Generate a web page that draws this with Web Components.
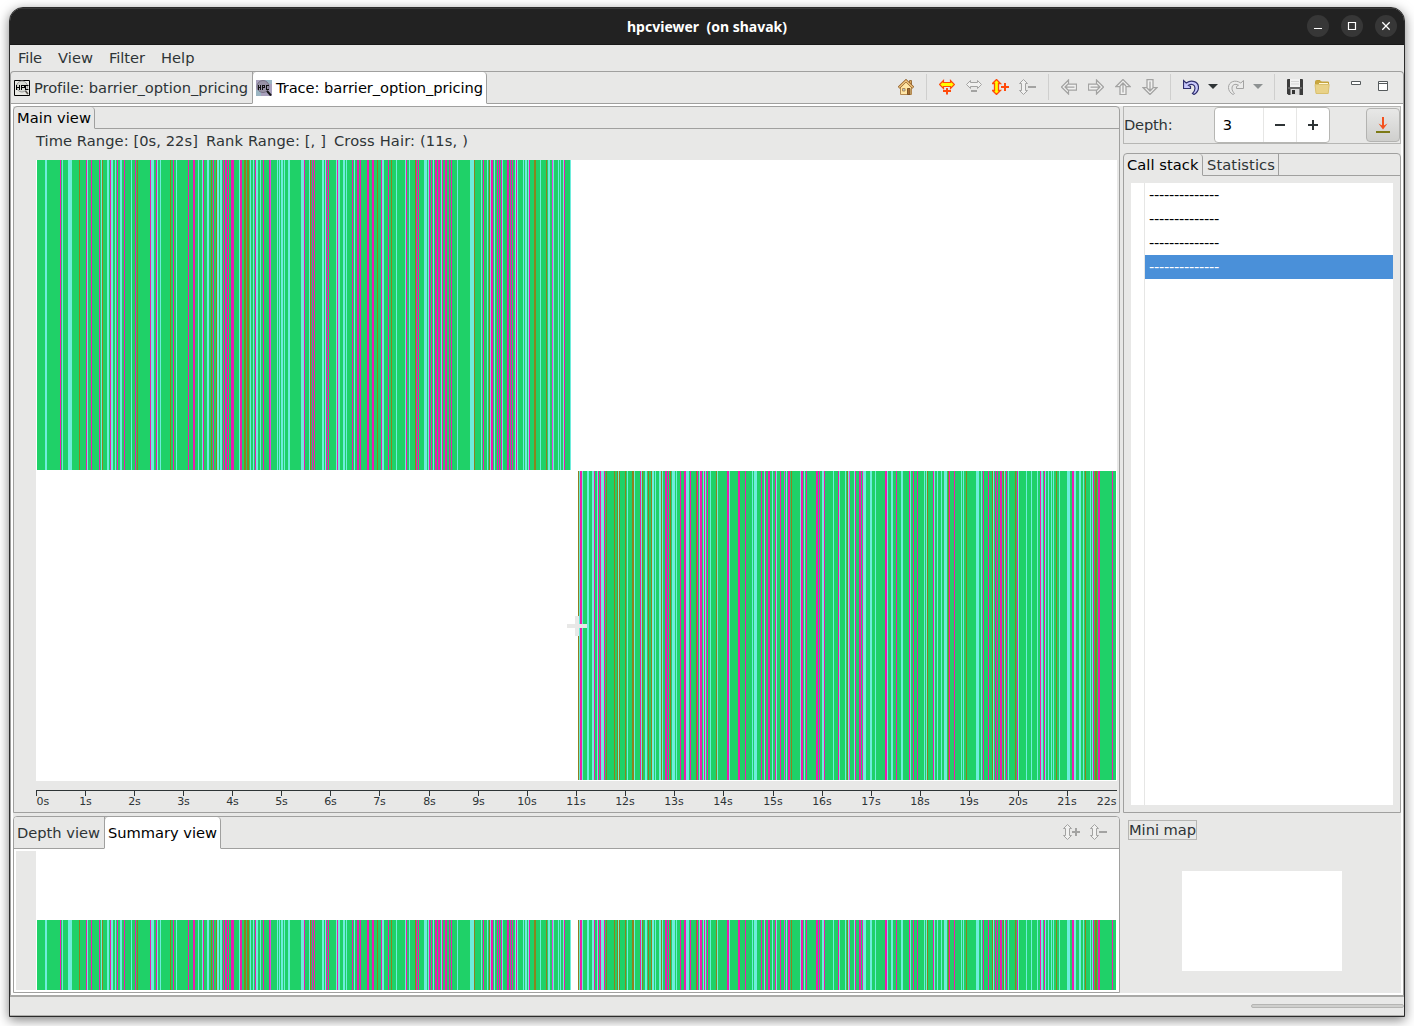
<!DOCTYPE html>
<html lang="en"><head><meta charset="utf-8"><title>hpcviewer</title>
<style>
html,body{margin:0;height:100%;overflow:hidden;background:#fff}
body{font:14.667px "DejaVu Sans",sans-serif;color:#2e3436}
</style></head><body>
<hpc-window></hpc-window>
<script>
const define=(name,html,after)=>customElements.define(name,class extends HTMLElement{
  connectedCallback(){
    if(this.shadowRoot)return;
    const r=this.attachShadow({mode:'open'});
    r.innerHTML=typeof html==='function'?html(this):html;
    if(after)after(this,r);
  }
});

/* Single-line label; "w" is the advance width that the text is tracked to. */
define('hpc-label','<style>:host{display:block;white-space:pre;flex:none}span{display:inline-block}</style><span><slot></slot></span>',(el,r)=>{
  const w=+el.getAttribute('w');if(!w)return;
  const s=r.querySelector('span'),n=el.textContent.length;
  s.style.letterSpacing=((w-s.getBoundingClientRect().width)/n).toFixed(3)+'px';
});

const V='M4.5.5 8.5 4.5H6.5V11.5H8.5L4.5 15.5.5 11.5H2.5V4.5H.5Z';
const A='M.5 8 7.5 1V5H15.5V11H7.5V15Z M4 8H13.5M7 5 4 8 7 11';
const gray='fill="#f1f1f0" stroke="#a3a3a2"';
const icons={
 home:'<path d="M2.5 8V15.5H13.5V8L8 3Z" fill="#ffe6a6" stroke="#b58a52"/><path d="M11.500 1.500h2V6h-2z" fill="#dcaa61" stroke="#9c713c"/><path d="M.7 8.7 8 1.6 15.3 8.7" fill="none" stroke="#96652e" stroke-width="2.6"/><path d="M1.2 8.4 8 1.9 14.8 8.4" fill="none" stroke="#f7cd86" stroke-width="1.300"/><path d="M4.5 9.5h2.500v2.500h-2.500z" fill="#a6c9e7" stroke="#b58d55"/><path d="M9.5 9.5h2.500v6h-2.500z" fill="#a86c2e" stroke="#7e5526"/>',
 hin:'<path d="M.5 5.5 4.5 1.5V3.5H11.5V1.5L15.5 5.5 11.5 9.5V7.5H4.5V9.5Z" fill="#ff0" stroke="#ff4a0b" stroke-width="1.200"/><path d="M7 9h2v2h3v2H9V15.500H7V13H4v-2h3z" fill="#ff4a0b"/>',
 hout:`<path d="M.5 5.5 4.5 1.5V3.5H11.5V1.5L15.5 5.5 11.5 9.5V7.5H4.5V9.5Z" ${gray}/><path d="M5 11h6v2H5z" fill="#a3a3a2"/>`,
 vin:`<path d="${V}" fill="#ff0" stroke="#ff4a0b" stroke-width="1.300"/><path d="M12 4h2v3h3v2h-3v3h-2V9H9V7h3z" fill="#ff4a0b"/>`,
 vout:`<path d="${V}" ${gray}/><path d="M9 7h8v2H9z" fill="#a3a3a2"/>`,
 ving:`<path d="${V}" ${gray}/><path d="M12 4h2v3h3v2h-3v3h-2V9H9V7h3z" fill="#a3a3a2"/>`,
 left:`<path d="${A}" ${gray} stroke-width="1.25"/>`,
 right:`<path transform="matrix(-1 0 0 1 16 0)" d="${A}" ${gray} stroke-width="1.25"/>`,
 up:`<path transform="matrix(0 1 1 0 0 0)" d="${A}" ${gray} stroke-width="1.25"/>`,
 down:`<path transform="matrix(0 -1 1 0 0 16)" d="${A}" ${gray} stroke-width="1.25"/>`,
 undo:'<path d="M.5 1.5V9.5H7.5V7.5L5.5 6.2C9 4.3 12 5.7 12 9.2 12 11.5 11 13 9.5 14.5L11 15.5C14 13.7 15.5 11.5 15.5 8.5 15.5 2.5 8.5.3 3.2 4Z" fill="#c8c8fb" stroke="#30306e" stroke-width="1.2"/>',
 redo:'<path transform="matrix(-1 0 0 1 16 0)" d="M.5 1.5V9.5H7.5V7.5L5.5 6.2C9 4.3 12 5.7 12 9.2 12 11.5 11 13 9.5 14.5L11 15.5C14 13.7 15.5 11.5 15.5 8.5 15.5 2.5 8.5.3 3.2 4Z" fill="#ebebea" stroke="#a3a3a2"/>',
 caret:'<path d="M0 0H10L5 5Z" fill="#2e3436"/>',
 caretg:'<path d="M0 0H10L5 5Z" fill="#8d9192"/>',
 save:'<path d="M0 1Q0 0 1 0H15Q16 0 16 1V16H1.500L0 14.500Z" fill="#3c3c3c"/><path d="M3 0h10v8H3z" fill="#f2f2f2"/><path d="M1 8h14v2H1z" fill="#666"/><path d="M3.500 10h9v6h-9z" fill="#dcdcdc"/><path d="M5 11h3v4H5z" fill="#333"/><path d="M4 2.5h8M4 5h8" stroke="#d5d5d5"/>',
 folder:'<path d="M1.5 5V2.5Q1.5 1.5 2.5 1.5H6L7.5 3H14.5V7H1.5Z" fill="#c9a73f" stroke="#c3a13b"/><path d="M5 4h9v2H5z" fill="#fff8d8"/><path d="M1 5.5H15.2L14.2 14.5H2Z" fill="#e9d288" stroke="#d9c06e"/>',
 min:'<path d="M.5.5h9v3h-9z" fill="#fff" stroke="#555a5c"/>',
 max:'<path d="M.5.5h9v9h-9zM.5 2.5h9" fill="#fff" stroke="#555a5c"/>',
 drop:'<path d="M8 0V9" stroke="#f4511e" stroke-width="2"/><path d="M3.5 6.500 8 12.5 12.5 6.500 8 9Z" fill="#f4511e"/><path d="M1 14h14v2H1z" fill="#7d7a16"/>',
 prof:'<path d="M.5.5h15v15H.5z" fill="#e9e9e4" stroke="#000"/><circle cx="8" cy="6.5" r="5.5" fill="#d7d9d2" stroke="#999"/><path d="M11.5 11 14 14" stroke="#55504a" stroke-width="1.6"/><path d="M2.500 5v5M5.500 5v5M2 7.500h4M7.500 10V5M7 5.500h3M10.500 5v3M7 7.500h3M11.500 5v5M11 5.500h3.500M11 9.500h3.500" fill="none" stroke="#000"/>',
 trace:'<path d="M0 0h16v16H0z" fill="#a9a1bd"/><path d="M9 0h7v4H9zM0 10h5v6H0z" fill="#9bb5c2"/><circle cx="7" cy="6.5" r="6" fill="#9993a6" stroke="#777184"/><path d="M11 11 15 15.5" stroke="#161616" stroke-width="2"/><path d="M2.500 5v5M4.500 5v5M2 7.500h3M6.500 10V5M6 5.500h3M8.500 5v3M6 7.500h3M10.500 5v5M10 5.500h3M10 9.500h3" fill="none" stroke="#111"/>',
 wmin:'<path d="M4 10.500h8" stroke="#fff"/>',
 wmax:'<path d="M4.500 4.500h7v7h-7z" fill="none" stroke="#fff" stroke-width="1.200"/>',
 wx:'<path d="M4.300 4.300 11.700 11.700M11.700 4.300 4.300 11.700" stroke="#fff" stroke-width="1.300"/>'
};
const size={caret:[10,5],caretg:[10,5],min:[10,4],max:[10,10],ving:[17,16],vin:[17,16],vout:[17,16]};
define('hpc-icon',el=>{
  const n=el.getAttribute('name'),[w,h]=size[n]||[16,16];
  return `<style>:host{display:block;flex:none}svg{display:block}</style><svg width="${w}" height="${h}" viewBox="0 0 ${w} ${h}">${icons[n]}</svg>`;
});

/* Trace samples: kind, pixel column, optional run length.
   c = cyan, m = magenta, b = brown, p = light magenta */
const left='c45,2 m60 c62 c68,4 b79 m86 c87 m91 m99 c101 b102 c107 c108 m110 c111,2 c115 m117 c120,2 m124 c131 m135 b137 m150 c151,3 m156 c157 c160 b170 m173 c176 m188 m193,2 c198 c202 m203 c207,2 b211 m213 b216 c217,2 c220,2 m223 m225,2 m228 m231,3 c239 m240,2 b244,2 b247,2 c250 c253 m255 c256,2 c260 m263 m269 p270 c277 c279 c281,2 c284 c288,2 c301,3 m304 c309 b310 m312 m314 c322,2 c325 m326 m328 c336 m337 c338,2 c343,2 c346 m352 c354 m357,2 m360 m367,2 m372,2 b377 m381 c382,2 m388 b391 c396 c405 m406 c409 b415 m416 m418 c424,3 c428 m429 m431 c433 m435,2 m438,2 c441 m442 m445,2 m449 m451 c457 c470,4 b474 c481 m483 c487 b489 c490 m491,2 c494 m497 m499 m501 c502 m507,2 m510 m512 c515 m516 c517 c523 c525,2 c528 m529 b534,2 c540 b546 c548,2 p552 c553 c558 c560 c563 m564 c570';
const right='b578 c579 m580,2 c582 c587,2 c592,2 m594 c597 m598 m600 c601 c602,2 m604 b606 b614 b617 c618 b619 b625 c627 b632,2 c634 m640 c641 b642 c645,2 b648 b651 c652,2 c655 c659,2 b661 c662 m665,2 m668 b670 c672,3 c676 m680 m684,2 c686,3 m690 b696 m697 c699 m700,2 c703 m704 c705 m707 c710 b716 c717 m727,2 c729 m738,2 m745 c752 c754,3 m761 c764 m765 m768,2 c772 m775 c776 m780 p784 c786 m788,2 b791 c800 m801,2 c804 m806 m816,2 m819 c822,2 m824 c833 m838 c839 c845 b847 c848 p849 c854 m855 m859,2 m862 c863,3 c870,2 c875 m885,2 c887 c891,2 m896 c901,2 m909 c910 m913 m917 c924 c926 b927 m933 c934 c937 c941 c944,3 b948 m949 m954 c961 c963 b966 c976,3 c981 m983 m988 b992 c993 m995 m997 m1000,2 b1003 c1004 m1006 c1008 b1015 m1017 c1018 c1026 c1031 c1037 m1040 c1041,2 m1044 c1045 c1048 c1051 c1053 b1056 c1059 c1067,3 m1072,2 c1074,2 c1079,2 c1083 b1085 c1090 c1092 m1093 b1095,2 m1098,2 m1112';
const tint={c:'#6eeddb',m:'#eb1eaf',b:'#8c821e',p:'#e04be0'};
const band=(src,from,to,y,h)=>{
  let s=`<rect x="${from-36}" y="${y}" width="${to-from}" height="${h}" fill="#1fd168"/>`;
  for(const t of src.split(' ')){const [x,w=1]=t.slice(1).split(',');s+=`<rect x="${x-36}" y="${y}" width="${w}" height="${h}" fill="${tint[t[0]]}"/>`}
  return s;
};
define('hpc-trace',el=>{
  const main=el.getAttribute('mode')==='main',h=main?621:140;
  const g=main?band(left,37,571,0,310)+band(right,578,1116,311,309)+'<path d="M531 466h20M541 456v20" stroke="#e8e8e7" stroke-width="4"/>'
              :band(left,37,571,70,70)+band(right,578,1116,70,70);
  return `<style>:host{display:block;flex:none;width:1081px;background:#fff}svg{display:block}</style><svg width="1081" height="${h}" shape-rendering="crispEdges">${g}</svg>`;
});
define('hpc-axis',()=>{
  let s='<path d="M0 .5H1081" stroke="#2e3436"/>';
  for(let i=0;i<=22;i++){
    const x=Math.floor(i*1081/22)+.5;
    if(i<22)s+=`<path d="M${x} 1V6" stroke="#2e3436"/>`;
    s+=`<text x="${i==0?.5:i==22?1080.5:i>9?x-.5:x}" y="15" text-anchor="${i==0?'start':i==22?'end':'middle'}">${i}s</text>`;
  }
  return `<style>:host{display:block;flex:none}svg{display:block;font:11px "DejaVu Sans",sans-serif;fill:#2e3436}</style><svg width="1081" height="18">${s}</svg>`;
});

define('hpc-titlebar',`<style>:host{display:flex;height:37px;flex:none;align-items:center;background:#222;color:#fff;box-sizing:border-box;border-top:1px solid #383838;border-bottom:1px solid #181818;font:bold 14px "Noto Sans","Open Sans",sans-serif}
.side{flex:1;display:flex;justify-content:flex-end;gap:12px;padding-right:7px;margin-top:-1px}.side:first-child{padding-left:7px;padding-right:0}
.b{width:22px;height:22px;border-radius:50%;background:#373737;display:grid;place-items:center}</style>
<div class="side"></div><hpc-label w="160">hpcviewer  (on shavak)</hpc-label><div class="side"><div class="b"><hpc-icon name="wmin"></hpc-icon></div><div class="b"><hpc-icon name="wmax"></hpc-icon></div><div class="b"><hpc-icon name="wx"></hpc-icon></div></div>`);

define('hpc-menubar',`<style>:host{display:flex;height:26px;flex:none;padding-left:8px;gap:16px;line-height:26px;box-sizing:border-box}</style>
<hpc-label w="24">File</hpc-label><hpc-label w="35">View</hpc-label><hpc-label w="36">Filter</hpc-label><hpc-label w="33.5">Help</hpc-label>`);

define('hpc-tab',`<style>:host{display:flex;align-items:center;flex:none;box-sizing:border-box;border-right:1px solid #a0a09f;border-bottom:1px solid #a0a09f;gap:4px}
:host([on]){color:#000;border-bottom-color:transparent;border-radius:0 4px 0 0}
:host([white]){background:#fff;border-left:1px solid #a0a09f;border-bottom-color:#fff;border-radius:4px 4px 0 0;margin-left:-1px}</style><slot></slot>`);

define('hpc-toolbar',`<style>:host{display:flex;flex:1;border-bottom:1px solid #a0a09f;justify-content:flex-end;align-items:center;padding:0 15px 2px 0;box-sizing:border-box}
i{width:1px;height:26px;background:#cfcfce;flex:none}</style>
<hpc-icon name="home"></hpc-icon><i style="margin:0 12px"></i>
<hpc-icon name="hin"></hpc-icon><hpc-icon name="hout" style="margin-left:11px"></hpc-icon><hpc-icon name="vin" style="margin-left:10px"></hpc-icon><hpc-icon name="vout" style="margin-left:10px"></hpc-icon><i style="margin:0 12px"></i>
<hpc-icon name="left"></hpc-icon><hpc-icon name="right" style="margin-left:11px"></hpc-icon><hpc-icon name="up" style="margin-left:11px"></hpc-icon><hpc-icon name="down" style="margin-left:11px"></hpc-icon><i style="margin:0 12px"></i>
<hpc-icon name="undo"></hpc-icon><hpc-icon name="caret" style="margin-left:9px"></hpc-icon><hpc-icon name="redo" style="margin-left:10px"></hpc-icon><hpc-icon name="caretg" style="margin-left:9px"></hpc-icon><i style="margin:0 12px 0 11px"></i>
<hpc-icon name="save"></hpc-icon><hpc-icon name="folder" style="margin-left:11px"></hpc-icon><hpc-icon name="min" style="margin:0 0 7px 21px"></hpc-icon><hpc-icon name="max" style="margin:0 0 2px 17px"></hpc-icon>`);

define('hpc-editor-tabs',`<style>:host{display:flex;height:33px;flex:none;box-sizing:border-box;border:1px solid #a0a09f;border-bottom:0;border-radius:4px 4px 0 0}</style>
<hpc-tab style="width:242px;padding-left:3px"><hpc-icon name="prof"></hpc-icon><hpc-label w="214">Profile: barrier_option_pricing</hpc-label></hpc-tab>
<hpc-tab on white style="width:235px;padding-left:3px"><hpc-icon name="trace"></hpc-icon><hpc-label w="207">Trace: barrier_option_pricing</hpc-label></hpc-tab>
<hpc-toolbar></hpc-toolbar>`);

define('hpc-main-view',`<style>:host{display:flex;flex-direction:column;height:707px;flex:none;box-sizing:border-box;border:1px solid #a0a09f;border-radius:4px 4px 0 0;background:#e8e8e7}
.h{display:flex;height:22px;flex:none}.h b{flex:1;border-bottom:1px solid #a0a09f}
.info{display:flex;height:31px;line-height:24px;padding-left:22px;gap:8px}.c{padding-left:22px}</style>
<div class="h"><hpc-tab on style="width:81px;padding-left:3px"><hpc-label w="74">Main view</hpc-label></hpc-tab><b></b></div>
<div class="info"><hpc-label w="162">Time Range: [0s, 22s]</hpc-label><hpc-label w="120">Rank Range: [, ]</hpc-label><hpc-label w="134">Cross Hair: (11s, )</hpc-label></div>
<div class="c"><hpc-trace mode="main"></hpc-trace><hpc-axis style="margin-top:9px"></hpc-axis></div>`);

define('hpc-summary-view',`<style>:host{display:flex;flex-direction:column;height:177px;flex:none;box-sizing:border-box;border:1px solid #a0a09f;border-radius:4px 4px 0 0;background:#fff}
.h{display:flex;height:32px;flex:none;background:#e8e8e7;border-radius:3px 3px 0 0}.t{flex:1;display:flex;justify-content:flex-end;align-items:center;gap:10px;padding:0 12px 2px 0;border-bottom:1px solid #a0a09f}
.c{display:flex;padding:2px 0 0 2px}.c b{width:20px;height:139px;background:#e8e8e7}</style>
<div class="h"><hpc-tab style="width:91px;padding-left:3px"><hpc-label w="83">Depth view</hpc-label></hpc-tab><hpc-tab on white style="width:117px;padding-left:3px"><hpc-label w="109">Summary view</hpc-label></hpc-tab>
<div class="t"><hpc-icon name="ving"></hpc-icon><hpc-icon name="vout"></hpc-icon></div></div><div class="c"><b></b><hpc-trace mode="summary" style="margin-top:-1px"></hpc-trace></div>`);

define('hpc-depth',`<style>:host{display:flex;height:38px;flex:none;box-sizing:border-box;border:1px solid #b6b6b4;align-items:center;background:#e8e8e7}
.s{display:flex;width:116px;height:36px;box-sizing:border-box;border:1px solid #b6b6b3;border-radius:4px;background:#fff;color:#000;margin-left:41.5px}
.s>*{display:grid;place-items:center}.v{width:48px;box-sizing:border-box;padding:0 23px 2px 0}.k{width:32px;border-left:1px solid #e6e6e5}
.b{width:34px;height:34px;box-sizing:border-box;border:1px solid #b3b3b1;border-radius:4px;background:linear-gradient(#e8e8e7,#cfcfcd);display:grid;place-items:center;margin:0 0 0 auto}</style>
<hpc-label w="48.5" style="padding-bottom:2px">Depth:</hpc-label><div class="s"><div class="v">3</div><div class="k"><svg width="12" height="12"><path d="M1 6h10" stroke="#2e3436" stroke-width="2"/></svg></div><div class="k"><svg width="12" height="12"><path d="M1 6h10M6 1v10" stroke="#2e3436" stroke-width="2"/></svg></div></div><div class="b"><hpc-icon name="drop"></hpc-icon></div>`);

define('hpc-callstack',`<style>:host{display:flex;flex-direction:column;height:660px;flex:none;margin-top:9px;box-sizing:border-box;border:1px solid #a0a09f;border-radius:4px 4px 0 0;background:#e8e8e7}
.h{display:flex;height:22px;flex:none}.h b{flex:1;border-bottom:1px solid #a0a09f}
.tree{margin:7px;flex:1;display:flex;background:#fff;color:#000}.g{width:13px;border-right:1px solid #e6e6e5}.r{flex:1}
.r div{height:24px;line-height:24px;padding-left:4px}.r .sel{background:#4a90d9;color:#fff}</style>
<div class="h"><hpc-tab on style="width:79px;padding-left:3px"><hpc-label w="71.5">Call stack</hpc-label></hpc-tab><hpc-tab style="width:76px;padding-left:4px"><hpc-label w="68">Statistics</hpc-label></hpc-tab><b></b></div>
<div class="tree"><div class="g"></div><div class="r"><div><hpc-label w="70">--------------</hpc-label></div><div><hpc-label w="70">--------------</hpc-label></div><div><hpc-label w="70">--------------</hpc-label></div><div class="sel"><hpc-label w="70">--------------</hpc-label></div></div></div>`);

define('hpc-minimap',`<style>:host{display:block;padding:7px 0 0 5px}.l{width:69px;height:20px;line-height:17px;box-sizing:border-box;border:1px solid #b6b6b4}
.m{width:160px;height:100px;background:#fff;margin:31px 0 0 54px}</style><div class="l"><hpc-label w="67">Mini map</hpc-label></div><div class="m"></div>`);

define('hpc-statusbar',`<style>:host{display:flex;height:21px;flex:none;box-sizing:border-box;border-top:2px solid #a9a9a7;border-bottom:1px solid #b0b0ae;align-items:center;justify-content:flex-end}
div{width:153px;height:4px;box-sizing:border-box;border:1px solid #b5b5b3;border-radius:2px;background:#cfcfcd}</style><div></div>`);

define('hpc-window',`<style>:host{display:flex;flex-direction:column;box-sizing:border-box;width:1396px;height:1010px;margin:7px 0 0 9px;border:1px solid #2b2b2b;border-radius:14px 14px 0 0;background:#e8e8e7;overflow:hidden;box-shadow:0 3px 12px rgba(0,0,0,.5)}
.body{display:flex;flex:1;background:#fff;border:solid #a0a09f;border-width:0 1px;padding:2px 2px 2px;box-sizing:border-box}
.in{display:flex;flex:1;gap:3px;background:#e8e8e7}
.l{display:flex;flex-direction:column;gap:3px;width:1107px;flex:none}.r{display:flex;flex-direction:column;flex:1}</style>
<hpc-titlebar></hpc-titlebar><hpc-menubar></hpc-menubar><hpc-editor-tabs></hpc-editor-tabs>
<div class="body"><div class="in"><div class="l"><hpc-main-view></hpc-main-view><hpc-summary-view></hpc-summary-view></div><div class="r"><hpc-depth></hpc-depth><hpc-callstack></hpc-callstack><hpc-minimap></hpc-minimap></div></div></div>
<hpc-statusbar></hpc-statusbar>`);
</script></body></html>
